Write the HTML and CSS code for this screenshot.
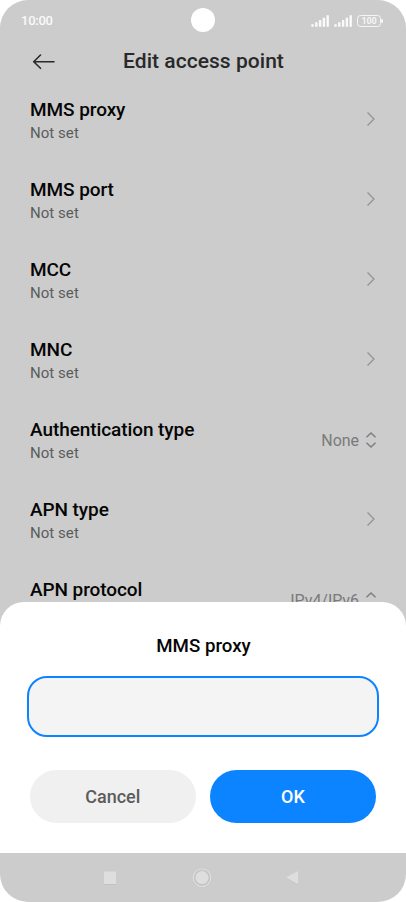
FILE: index.html
```
<!DOCTYPE html>
<html lang="en">
<head>
<meta charset="utf-8">
<title>Edit access point</title>
<link rel="stylesheet" href="styles.css">
</head>
<body>
<div class="phone">
  <div class="status">
    <span class="clock">10:00</span>
    <span class="camera"></span>
    <div class="indicators">
      <svg class="signal" width="19" height="12" viewBox="0 0 19 12"><path d="M1.500 9.200v2.600M5.300 7.200v4.600M9.100 5v6.800M12.900 2.700v9.100M16.700 .2v11.600"/></svg>
      <svg class="signal" width="19" height="12" viewBox="0 0 19 12"><path d="M1.500 9.200v2.600M5.300 7.200v4.600M9.100 5v6.800M12.900 2.700v9.100M16.700 .2v11.600"/></svg>
      <span class="battery">100</span>
    </div>
  </div>
  <header class="header">
    <svg class="back" width="24" height="18" viewBox="0 0 24 18"><path d="M22 8.700H1.700M8.500 2L1.700 8.700l6.800 6.600"/></svg>
    <h1>Edit access point</h1>
  </header>
  <main class="list">
    <div class="row"><div><h2>MMS proxy</h2><p>Not set</p></div><svg class="chevron" width="10" height="16" viewBox="0 0 10 16"><path d="M1.500 1.500L8 8l-6.500 6.500"/></svg></div>
    <div class="row"><div><h2>MMS port</h2><p>Not set</p></div><svg class="chevron" width="10" height="16" viewBox="0 0 10 16"><path d="M1.500 1.500L8 8l-6.500 6.500"/></svg></div>
    <div class="row"><div><h2>MCC</h2><p>Not set</p></div><svg class="chevron" width="10" height="16" viewBox="0 0 10 16"><path d="M1.500 1.500L8 8l-6.500 6.500"/></svg></div>
    <div class="row"><div><h2>MNC</h2><p>Not set</p></div><svg class="chevron" width="10" height="16" viewBox="0 0 10 16"><path d="M1.500 1.500L8 8l-6.500 6.500"/></svg></div>
    <div class="row"><div><h2>Authentication type</h2><p>Not set</p></div><div class="choice"><span>None</span><svg class="updown" width="12" height="16" viewBox="0 0 12 16"><path d="M1.500 5.300L6 1l4.500 4.300M1.500 10.700L6 15l4.500-4.300"/></svg></div></div>
    <div class="row"><div><h2>APN type</h2><p>Not set</p></div><svg class="chevron" width="10" height="16" viewBox="0 0 10 16"><path d="M1.500 1.500L8 8l-6.500 6.500"/></svg></div>
    <div class="row"><div><h2>APN protocol</h2></div><div class="choice"><span>IPv4/IPv6</span><svg class="updown" width="12" height="16" viewBox="0 0 12 16"><path d="M1.500 5.300L6 1l4.500 4.300M1.500 10.700L6 15l4.500-4.300"/></svg></div></div>
  </main>
  <section class="sheet">
    <h2>MMS proxy</h2>
    <input class="field" type="text" aria-label="MMS proxy">
    <div class="actions">
      <button class="cancel">Cancel</button>
      <button class="ok">OK</button>
    </div>
  </section>
  <nav class="nav">
    <svg width="16" height="22" viewBox="0 0 16 22"><path class="shade" d="M2 5.500h12v12.500H2z"/><path class="fill" d="M2 4.500h12v12.500H2z"/></svg>
    <svg width="22" height="22" viewBox="0 0 22 22"><circle class="ring-shade" cx="12" cy="11" r="9"/><circle class="ring" cx="12" cy="10.700" r="8.900"/><circle class="shade" cx="12" cy="10.900" r="7.500"/><circle class="fill" cx="12" cy="10.700" r="6.600"/></svg>
    <svg width="16" height="22" viewBox="0 0 16 22"><path class="shade" d="M2 11L14 4.500v13.500z"/><path class="fill" d="M2 10.600L14 3.900v13.400z"/></svg>
  </nav>
</div>
</body>
</html>
```
FILE: styles.css
```
* { box-sizing: border-box; margin: 0; padding: 0; }
body { background: #fff; font-family: Roboto, sans-serif; }
svg { display: block; fill: none; overflow: visible; }
.phone {
  width: 406px;
  height: 902px;
  display: flex;
  flex-direction: column;
  overflow: hidden;
  border-radius: 28px;
  background: #ccc;
}
.status {
  height: 40px;
  flex: none;
  display: grid;
  grid-template-columns: 1fr 24px 1fr;
  align-items: center;
  padding: 0 23px 0 21px;
  color: #fafafa;
}
.clock { font-size: 13px; font-weight: 500; line-height: 16px; padding-top: 2px; letter-spacing: -.25px; }
.camera { width: 24px; height: 24px; margin-left: 1px; border-radius: 50%; background: #fff; }
.indicators { display: flex; justify-content: flex-end; align-items: center; gap: 4px; padding-top: 2px; }
.signal { stroke: #fafafa; stroke-width: 2.4; }
.battery {
  position: relative;
  width: 24px;
  height: 12px;
  margin-right: 2px;
  border: 1.500px solid #f5f5f5;
  border-radius: 3.500px;
  font-size: 9px;
  font-weight: 700;
  line-height: 11px;
  letter-spacing: -.2px;
  text-align: center;
  color: #f5f5f5;
}
.battery::after {
  content: "";
  position: absolute;
  right: -3px;
  top: 3px;
  width: 2px;
  height: 4px;
  border-radius: 1px;
  background: #f5f5f5;
}
.header {
  height: 39px;
  flex: none;
  display: grid;
  grid-template-columns: 24px 1fr 24px;
  align-items: center;
  padding: 5px 31px 0 32px;
  color: #292929;
}
.back { stroke: #292929; stroke-width: 1.600; stroke-linecap: round; stroke-linejoin: round; }
.header h1 { text-align: center; font-size: 21px; font-weight: 500; line-height: 26px; letter-spacing: .04px; margin-top: -2px; }
.list { height: 523px; flex: none; }
.row { height: 80px; display: flex; justify-content: space-between; padding: 20px 30px 0 30px; }
.row h2 { font-size: 19px; font-weight: 500; line-height: 22px; color: #050505; letter-spacing: -.08px; }
.row p { font-size: 15px; line-height: 20px; margin-top: 2px; color: #5c5c5c; letter-spacing: .05px; }
.chevron { stroke: #929292; stroke-width: 1.300; margin-top: 12px; }
.choice { display: flex; align-items: center; gap: 6px; height: 20px; margin-top: 10px; margin-right: -1px; font-size: 16px; color: #7a7a7a; letter-spacing: -.05px; }
.choice span { line-height: 20px; padding-top: 3px; }
.updown { stroke: #7e7e7e; stroke-width: 1.500; margin-top: 1px; }
.sheet {
  position: relative;
  height: 251px;
  flex: none;
  padding: 33px 27px 0;
  border-radius: 24px 24px 0 0;
  background: #fff;
}
.sheet h2 { text-align: center; font-size: 18.700px; font-weight: 500; line-height: 22px; color: #050505; padding-left: 1px; }
.field {
  display: block;
  width: 351.500px;
  height: 60.500px;
  margin-top: 19px;
  border: 2px solid #0d84ff;
  border-radius: 20px;
  background: #f4f4f4;
  outline: none;
}
.actions { display: flex; justify-content: space-between; padding: 33.500px 3px 0; }
.actions button { width: 166px; height: 53px; border: 0; border-radius: 27px; font: 500 18px/22px Roboto, sans-serif; }
.cancel { background: #f0f0f0; color: #5c5c5c; }
.actions .cancel { width: 165.500px; }
.ok { background: #0d84ff; color: #fff; }
.nav { height: 49px; flex: none; display: flex; justify-content: space-between; align-items: center; padding: 0 106px 0 102px; }
.shade { fill: #c1c1c1; }
.fill { fill: #dedede; }
.ring { stroke: #dedede; stroke-width: 1.300; }
.ring-shade { stroke: #c0c0c0; stroke-width: 1.500; }
```
